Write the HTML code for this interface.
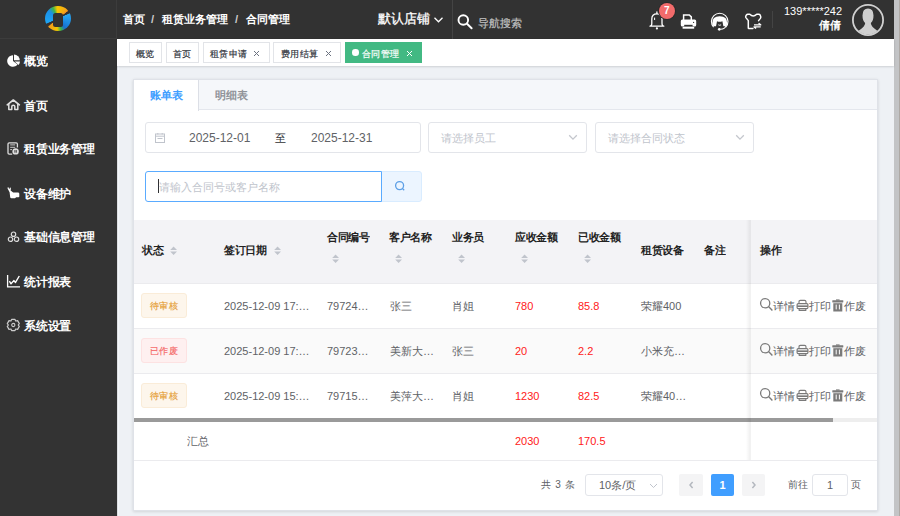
<!DOCTYPE html>
<html><head><meta charset="utf-8">
<style>
*{box-sizing:border-box;margin:0;padding:0}
html,body{width:900px;height:516px;overflow:hidden}
body{position:relative;background:#eef1f5;font-family:"Liberation Sans",sans-serif;color:#606266}
.a{position:absolute;white-space:nowrap}
svg{display:block}
/* sidebar */
#side{position:absolute;left:0;top:0;width:117px;height:516px;background:#333}
#logoline{position:absolute;left:0;top:38px;width:117px;height:1px;background:#3c3c3c}
.mi{position:absolute;left:24px;font-size:12px;transform:scale(.98);transform-origin:0 0;line-height:14px;color:#fff;font-weight:bold}
.mic{position:absolute;left:7px;width:13px;height:13px}
/* header */
#hdr{position:absolute;left:116px;top:0;width:778px;height:39px;background:#323232;border-left:1px solid #3c3c3c}
.bc{font-size:11.25px;line-height:14px;color:#fff;font-weight:bold}
#scroll{position:absolute;left:894px;top:0;width:6px;height:516px;background:#c3c4c6}
#scroll2{position:absolute;left:899px;top:0;width:1px;height:516px;background:#aea9a5}
/* tags */
#tagbar{position:absolute;left:117px;top:39px;width:777px;height:27px;background:#fff;box-shadow:0 1px 2px 0 rgba(0,0,0,.12),0 0 2px 0 rgba(0,0,0,.04)}
.tg{position:absolute;top:42px;height:21px;border:1px solid #e2e4e8;background:#fff}
.tgt{top:49px;font-size:10px;transform:scale(.93);transform-origin:0 0;line-height:12px;color:#2f333b;-webkit-text-stroke:.2px currentColor}
/* card */
#card{position:absolute;left:133px;top:79px;width:745px;height:432px;background:#fff;border:1px solid #dfe2e8;box-shadow:0 1px 3px 0 rgba(0,0,0,.10),0 0 4px 0 rgba(0,0,0,.03)}
#tabhd{position:absolute;left:134px;top:80px;width:743px;height:30px;background:#f5f7fa;border-bottom:1px solid #e4e7ed}
#tabact{position:absolute;left:134px;top:80px;width:65px;height:31px;background:#fff;border-right:1px solid #dcdfe6}
.tab{font-size:11px;line-height:14px;font-weight:bold}
.inp{position:absolute;border:1px solid #e3e5ea;border-radius:3px;background:#fff}
.ph{font-size:11px;line-height:14px;color:#c0c4cc}
/* table */
#thead{position:absolute;left:134px;top:220px;width:743px;height:63px;background:#f3f3f6}
.th{font-size:11px;line-height:14px;font-weight:bold;color:#222;transform:scale(.96);transform-origin:0 0}
.td{font-size:11px;line-height:14px;color:#606266}
.red{color:#ff2020}
.rowline{position:absolute;left:134px;width:743px;height:1px;background:#ebebee}
.st{position:absolute;left:141px;width:46px;height:25px;border:1px solid;border-radius:3px}
.stt{position:absolute;left:150px;font-size:10px;line-height:12px;transform:scale(.94);transform-origin:0 0;-webkit-text-stroke:.2px currentColor}
.st.w{background:#fdf6ec;border-color:#faecd8;color:#e6a23c}
.st.d{background:#fef0f0;border-color:#fde2e2;color:#f56c6c}
.pg{font-size:10px;line-height:14px;color:#606266}
</style></head><body>

<!-- SIDEBAR -->
<div id="side"></div>
<div id="logoline"></div>
<div class="a" style="left:45px;top:6px;width:25.5px;height:25px;border-radius:50%;background:conic-gradient(#f7c400 0deg,#f5a41a 45deg,#f08a1c 52deg,#323232 55deg,#323232 64deg,#2aa8f2 68deg,#1a86e0 120deg,#1b6fcf 145deg,#3cb44a 165deg,#f4c600 185deg,#f39c1a 228deg,#323232 234deg,#323232 244deg,#1ea4f3 248deg,#1a90e8 310deg,#3fb54a 335deg,#f7c400 355deg)"></div>
<div class="a" style="left:53px;top:12.5px;width:9.5px;height:14px;background:#323232;border-radius:2.5px"></div>
<!-- menu icons -->
<svg class="a" style="left:7px;top:54px" width="14" height="14" viewBox="0 0 14 14"><path d="M6 1.2A5.8 5.8 0 1 0 10.6 10.5L6 7z" fill="#fff"/><path d="M7 0.5V6.2H12.8A5.8 5.8 0 0 0 7 0.5z" fill="#fff"/><path d="M7.6 7.4H13A5.8 5.8 0 0 1 11.6 10.9z" fill="#fff"/></svg>
<svg class="a" style="left:0px;top:96px" width="24" height="16" viewBox="0 0 24 16"><path d="M7.2 8.8L13.3 4 19.4 8.8" fill="none" stroke="#e0e0e0" stroke-width="1.6" stroke-linejoin="round" stroke-linecap="round"/><path d="M8.8 7.7V13.6H11.8V10.6Q11.8 9.2 13.3 9.2Q14.8 9.2 14.8 10.6V13.6H17.8V7.7" fill="none" stroke="#e0e0e0" stroke-width="1.5" stroke-linejoin="round"/></svg>
<svg class="a" style="left:4px;top:139px" width="20" height="20" viewBox="0 0 20 20"><path d="M13.4 8.6V5Q13.4 3.8 12.2 3.8H5.2Q4 3.8 4 5V14Q4 15.1 5.2 15.1H8.2" fill="none" stroke="#ddd" stroke-width="1.3"/><path d="M6.2 5.9H11.2M6.2 8.3H11.2M6.2 10.6H8" stroke="#ddd" stroke-width=".9"/><circle cx="11.6" cy="12.4" r="3.2" fill="#ddd"/><path d="M10.9 11.1V13.7M12.3 11.1V13.7" stroke="#323232" stroke-width=".9"/></svg>
<svg class="a" style="left:0px;top:183px" width="22" height="18" viewBox="0 0 22 18"><path d="M7.6 5.4Q7.4 4.4 8.2 4L9.3 6.3 10.1 4.3Q10.9 4.8 10.9 5.8L10.6 7.6 13.2 9.6H17.8Q19.3 9.6 19.3 10.8V13.6Q19.3 14.3 18.5 14.3H16.2L15 15.3H11.4Q10.4 15.3 10.2 14.3L9.6 9.3Z" fill="#fff"/></svg>
<svg class="a" style="left:7px;top:231px" width="13" height="12" viewBox="0 0 13 12"><circle cx="6.5" cy="3.2" r="2.2" fill="none" stroke="#ddd" stroke-width="1.2"/><circle cx="3.5" cy="8.2" r="2.2" fill="none" stroke="#ddd" stroke-width="1.2"/><circle cx="9.5" cy="8.2" r="2.2" fill="none" stroke="#ddd" stroke-width="1.2"/></svg>
<svg class="a" style="left:6px;top:273px" width="15" height="15" viewBox="0 0 15 15"><path d="M1.6 2V13.8H14" fill="none" stroke="#fff" stroke-width="1.3"/><path d="M3.4 8.2L5 10.8 7.8 7.6 9.5 9.4 13.3 3" fill="none" stroke="#fff" stroke-width="1.4" stroke-linejoin="round"/></svg>
<svg class="a" style="left:6px;top:318px" width="15" height="14" viewBox="0 0 15 14"><path d="M5.6 1.4H9L9.6 3 11.6 2.6 13.3 5.6 12.2 7 13.3 8.4 11.6 11.4 9.6 11 9 12.6H5.6L5 11 3 11.4 1.3 8.4 2.4 7 1.3 5.6 3 2.6 5 3z" fill="none" stroke="#ccc" stroke-width="1.2" stroke-linejoin="round"/><circle cx="7.3" cy="7" r="1.6" fill="none" stroke="#ccc" stroke-width="1.1"/></svg>

<div class="mi a" style="top:54px">概览</div>
<div class="mi a" style="top:99px">首页</div>
<div class="mi a" style="top:142px">租赁业务管理</div>
<div class="mi a" style="top:187px">设备维护</div>
<div class="mi a" style="top:230px">基础信息管理</div>
<div class="mi a" style="top:275px">统计报表</div>
<div class="mi a" style="top:319px">系统设置</div>

<!-- HEADER -->
<div id="hdr"></div>
<div class="a bc" style="left:123px;top:12px">首页</div>
<div class="a bc" style="left:151px;top:12px;color:#ccc">/</div>
<div class="a bc" style="left:162px;top:12px">租赁业务管理</div>
<div class="a bc" style="left:235px;top:12px;color:#ccc">/</div>
<div class="a bc" style="left:246px;top:12px">合同管理</div>
<div class="a" style="left:378px;top:11px;font-size:13px;line-height:15px;color:#fff;-webkit-text-stroke:.3px #fff">默认店铺</div>
<svg class="a" style="left:433px;top:16px" width="11" height="8" viewBox="0 0 11 8"><path d="M1.5 1.8L5.5 5.8 9.5 1.8" fill="none" stroke="#fff" stroke-width="1.3"/></svg>
<div class="a" style="left:452px;top:0;width:1px;height:39px;background:#444"></div>
<svg class="a" style="left:456px;top:14px" width="18" height="17" viewBox="0 0 18 17"><circle cx="7.3" cy="6" r="4.8" fill="none" stroke="#fff" stroke-width="1.9"/><path d="M10.8 9.5L15.6 14.2" stroke="#fff" stroke-width="2" stroke-linecap="round"/></svg>
<div class="a" style="left:478px;top:16px;font-size:11px;line-height:14px;color:#c0c0c0;-webkit-text-stroke:.2px #c0c0c0">导航搜索</div>

<!-- header icons -->
<svg class="a" style="left:645px;top:0px" width="24" height="32" viewBox="0 0 24 32"><path d="M11.9 11.9V13.6" stroke="#fff" stroke-width="1.3" stroke-linecap="round"/><path d="M5 26.2Q6.8 26 6.8 23.5V19Q6.8 13.8 11.9 13.8Q17 13.8 17 19V23.5Q17 26 18.8 26.2Z" fill="none" stroke="#fff" stroke-width="1.3" stroke-linejoin="round"/><path d="M9.6 17.6V20" stroke="#fff" stroke-width="1"/><circle cx="11.9" cy="28.4" r="1.1" fill="#fff"/></svg>
<div class="a" style="left:658.6px;top:2.8px;width:16.2px;height:16.2px;border-radius:50%;background:#f26b6b;box-shadow:0 0 0 1px #2a2a2a;color:#fff;font-size:10px;font-weight:bold;line-height:16px;text-align:center">7</div>
<svg class="a" style="left:677px;top:8px" width="24" height="24" viewBox="0 0 24 24"><path d="M6.6 12V6.9H12.3L14.3 8.9V12" fill="none" stroke="#fff" stroke-width="1.5"/><rect x="3.8" y="11.6" width="15.4" height="6.8" rx="1.5" fill="#fff"/><rect x="7.2" y="16.8" width="8.4" height="1.6" fill="#323232"/><rect x="5.6" y="18.9" width="11.6" height="1.8" fill="#fff"/><circle cx="16.6" cy="14.4" r=".6" fill="#323232"/></svg>
<svg class="a" style="left:706px;top:8px" width="26" height="26" viewBox="0 0 26 26"><path d="M7.6 19.2A8.3 8.3 0 1 1 19.8 19.2" fill="none" stroke="#fff" stroke-width="1.1"/><path d="M6.2 15.5Q6 8.3 13.7 8.3Q21.4 8.3 21.2 15.5Q21.1 18 19.3 18.2L17.4 18.2Q16.9 16 16.4 13.2Q13.5 14.4 11 13.2Q10.5 16 10 18.2L8.1 18.2Q6.3 18 6.2 15.5z" fill="#fff"/><path d="M12.3 16.8Q13.7 17.8 15.1 16.8" fill="none" stroke="#fff" stroke-width=".9"/><path d="M19.8 18.2Q18.8 21.2 14.6 21.3" fill="none" stroke="#fff" stroke-width="1.1"/><circle cx="13.3" cy="21.3" r="1.4" fill="#fff"/></svg>
<svg class="a" style="left:740px;top:8px" width="26" height="26" viewBox="0 0 26 26"><path d="M12.9 20.6H8.8Q8.3 20.6 8.3 20.1V12.6L5.9 9.6Q5.5 9 5.8 8.2L6.4 7Q6.9 6.3 7.8 6.3H9.8Q13.2 9.6 16.7 6.3H18.8Q19.7 6.3 20.2 7.2L20.7 8.5Q21 9.5 20.4 10.4L18.6 12.6" fill="none" stroke="#fff" stroke-width="1.5" stroke-linejoin="round" stroke-linecap="round"/><path d="M14 16.9H20.7L18.6 15.3M20.7 18.9H14L16.1 20.5" fill="none" stroke="#fff" stroke-width="1.4" stroke-linejoin="round"/></svg>
<div class="a" style="left:772px;top:11px;width:1px;height:17px;background:#444"></div>
<div class="a" style="left:784px;top:5px;font-size:11px;line-height:13px;color:#fff">139*****242</div>
<div class="a" style="left:819px;top:18px;font-size:11px;line-height:14px;color:#fff;font-weight:bold">倩倩</div>
<svg class="a" style="left:851px;top:3px" width="34" height="34" viewBox="0 0 34 34"><defs><clipPath id="cc"><circle cx="17" cy="17" r="14.5"/></clipPath></defs><circle cx="17" cy="17" r="15.1" fill="none" stroke="#d0d0d0" stroke-width="1.8"/><g clip-path="url(#cc)"><path d="M17 5.5Q11.5 5.5 11.5 12.5Q11.5 18 14.2 20Q14 23.5 8 27.5Q6 29 5 32H29Q28 29 26 27.5Q20 23.5 19.8 20Q22.5 18 22.5 12.5Q22.5 5.5 17 5.5z" fill="#cfcfcf"/></g></svg>

<div id="scroll"></div><div id="scroll2"></div>

<div class="a" style="left:117px;top:66px;width:1px;height:450px;background:#dde0e4"></div><div class="a" style="left:118px;top:66px;width:1px;height:450px;background:#f4f7fa"></div>
<!-- TAGS -->
<div id="tagbar"></div>
<div class="tg" style="left:129px;width:33px"></div>
<div class="tg" style="left:166px;width:33px"></div>
<div class="tg" style="left:203px;width:67px"></div>
<div class="tg" style="left:273px;width:68px"></div>
<div class="tg" style="left:345px;width:77px;background:#42b983;border-color:#42b983"></div>
<div class="a tgt" style="left:136px">概览</div>
<div class="a tgt" style="left:173px">首页</div>
<div class="a tgt" style="left:210px">租赁申请</div><svg class="a" style="left:253px;top:50px" width="7" height="7" viewBox="0 0 7 7"><path d="M1 1L6 6M6 1L1 6" stroke="#6b7280" stroke-width="1"/></svg>
<div class="a tgt" style="left:281px">费用结算</div><svg class="a" style="left:325px;top:50px" width="7" height="7" viewBox="0 0 7 7"><path d="M1 1L6 6M6 1L1 6" stroke="#6b7280" stroke-width="1"/></svg>
<div class="a" style="left:352px;top:49px;width:6.5px;height:6.5px;border-radius:50%;background:#fff"></div>
<div class="a tgt" style="left:362px;color:#fff">合同管理</div><svg class="a" style="left:406px;top:50px" width="7" height="7" viewBox="0 0 7 7"><path d="M1 1L6 6M6 1L1 6" stroke="#fff" stroke-width="1"/></svg>

<!-- CARD -->
<div id="card"></div>
<div id="tabhd"></div>
<div id="tabact"></div>
<div class="a tab" style="left:150px;top:88px;color:#409eff">账单表</div>
<div class="a tab" style="left:215px;top:88px;color:#909399">明细表</div>

<!-- filters -->
<div class="inp" style="left:145px;top:122px;width:276px;height:31px"></div>
<svg class="a" style="left:154px;top:132px" width="12" height="12" viewBox="0 0 12 12"><rect x="1.5" y="2" width="9" height="8.5" fill="none" stroke="#c0c4cc" stroke-width="1"/><path d="M1.5 4.2H10.5M3.5 6.5H8.5" stroke="#c0c4cc" stroke-width="1"/><path d="M3.8 1V2.5M8.2 1V2.5" stroke="#c0c4cc" stroke-width="1"/></svg>
<div class="a" style="left:189px;top:131px;font-size:12px;line-height:14px;color:#606266">2025-12-01</div>
<div class="a" style="left:275px;top:131px;font-size:11px;line-height:14px;color:#303133">至</div>
<div class="a" style="left:311px;top:131px;font-size:12px;line-height:14px;color:#606266">2025-12-31</div>

<div class="inp" style="left:428px;top:122px;width:159px;height:31px"></div>
<div class="a ph" style="left:441px;top:131px">请选择员工</div>
<svg class="a" style="left:567px;top:133px" width="12" height="8" viewBox="0 0 12 8"><path d="M2.2 2.3L6 6.1 9.8 2.3" fill="none" stroke="#c4c7cd" stroke-width="1.3"/></svg>
<div class="inp" style="left:595px;top:122px;width:159px;height:31px"></div>
<div class="a ph" style="left:608px;top:131px">请选择合同状态</div>
<svg class="a" style="left:734px;top:133px" width="12" height="8" viewBox="0 0 12 8"><path d="M2.2 2.3L6 6.1 9.8 2.3" fill="none" stroke="#c4c7cd" stroke-width="1.3"/></svg>

<div class="a" style="left:381px;top:171px;width:41px;height:31px;background:#ecf5ff;border:1px solid #d9ecff;border-radius:0 3px 3px 0"></div>
<div class="inp" style="left:145px;top:171px;width:237px;height:31px;border-color:#5aabff;border-radius:3px 0 0 3px"></div>
<div class="a" style="left:158px;top:179px;width:1px;height:14px;background:#303133"></div>
<div class="a ph" style="left:159px;top:180px">请输入合同号或客户名称</div>
<svg class="a" style="left:394px;top:180px" width="12" height="12" viewBox="0 0 12 12"><circle cx="5.6" cy="5.6" r="4" fill="none" stroke="#5c9fe6" stroke-width="1.3"/><path d="M8.6 8.6L10.2 10.2" stroke="#5c9fe6" stroke-width="1.3"/></svg>

<!-- TABLE -->
<div id="thead"></div>
<div class="a th" style="left:142px;top:243px">状态</div>
<div class="a th" style="left:224px;top:243px">签订日期</div>
<div class="a th" style="left:327px;top:230px">合同编号</div>
<div class="a th" style="left:389px;top:230px">客户名称</div>
<div class="a th" style="left:452px;top:230px">业务员</div>
<div class="a th" style="left:515px;top:230px">应收金额</div>
<div class="a th" style="left:578px;top:230px">已收金额</div>
<div class="a th" style="left:641px;top:243px">租赁设备</div>
<div class="a th" style="left:704px;top:243px">备注</div>
<div class="a th" style="left:760px;top:243px">操作</div>

<svg width="0" height="0" style="position:absolute"><defs><g id="sort"><path d="M0.2 4L3.6 0.6 7 4z" fill="#c0c4cc"/><path d="M0.2 5.6L3.6 9 7 5.6z" fill="#c0c4cc"/></g></defs></svg>
<svg class="a" style="left:170px;top:246px" width="8" height="10"><use href="#sort"/></svg>
<svg class="a" style="left:274px;top:246px" width="8" height="10"><use href="#sort"/></svg>
<svg class="a" style="left:332px;top:254px" width="8" height="10"><use href="#sort"/></svg>
<svg class="a" style="left:395px;top:254px" width="8" height="10"><use href="#sort"/></svg>
<svg class="a" style="left:458px;top:254px" width="8" height="10"><use href="#sort"/></svg>
<svg class="a" style="left:521px;top:254px" width="8" height="10"><use href="#sort"/></svg>
<svg class="a" style="left:584px;top:254px" width="8" height="10"><use href="#sort"/></svg>

<div class="a" style="left:134px;top:328px;width:743px;height:45px;background:#fafafa"></div>
<div class="rowline" style="top:283px"></div>
<div class="rowline" style="top:328px"></div>
<div class="rowline" style="top:373px"></div>

<div class="st w a" style="top:293px"></div><div class="a stt" style="top:301px;color:#e6a23c">待审核</div>
<div class="st d a" style="top:338px"></div><div class="a stt" style="top:346px;color:#f56c6c">已作废</div>
<div class="st w a" style="top:383px"></div><div class="a stt" style="top:391px;color:#e6a23c">待审核</div>

<div class="a td" style="left:224px;top:299px">2025-12-09 17:…</div>
<div class="a td" style="left:327px;top:299px">79724…</div>
<div class="a td" style="left:390px;top:299px">张三</div>
<div class="a td" style="left:452px;top:299px">肖姐</div>
<div class="a td red" style="left:515px;top:299px">780</div>
<div class="a td red" style="left:578px;top:299px">85.8</div>
<div class="a td" style="left:641px;top:299px">荣耀400</div>

<div class="a td" style="left:224px;top:344px">2025-12-09 17:…</div>
<div class="a td" style="left:327px;top:344px">79723…</div>
<div class="a td" style="left:390px;top:344px">美新大…</div>
<div class="a td" style="left:452px;top:344px">张三</div>
<div class="a td red" style="left:515px;top:344px">20</div>
<div class="a td red" style="left:578px;top:344px">2.2</div>
<div class="a td" style="left:641px;top:344px">小米充…</div>

<div class="a td" style="left:224px;top:389px">2025-12-09 15:…</div>
<div class="a td" style="left:327px;top:389px">79715…</div>
<div class="a td" style="left:390px;top:389px">美萍大…</div>
<div class="a td" style="left:452px;top:389px">肖姐</div>
<div class="a td red" style="left:515px;top:389px">1230</div>
<div class="a td red" style="left:578px;top:389px">82.5</div>
<div class="a td" style="left:641px;top:389px">荣耀40…</div>

<!-- scrollbar -->
<div class="a" style="left:134px;top:418px;width:743px;height:4px;background:#eeeeee"></div>
<div class="a" style="left:134px;top:418px;width:699px;height:4px;background:#9a9a9a"></div>

<!-- summary -->
<div class="a td" style="left:187px;top:434px;color:#606266">汇总</div>
<div class="a td red" style="left:515px;top:434px">2030</div>
<div class="a td red" style="left:578px;top:434px">170.5</div>
<div class="rowline" style="top:460px"></div>

<!-- fixed col shadow -->
<div class="a" style="left:746px;top:220px;width:4px;height:240px;background:linear-gradient(90deg,rgba(0,0,0,0),rgba(0,0,0,.06))"></div><div class="a" style="left:750px;top:220px;width:1px;height:240px;background:rgba(0,0,0,.05)"></div>

<!-- actions -->
<svg width="0" height="0" style="position:absolute"><defs>
<g id="acts">
<circle cx="5.6" cy="5.6" r="4.6" fill="none" stroke="#8a8a8a" stroke-width="1.3"/><path d="M9 9L12.6 12.4" stroke="#8a8a8a" stroke-width="1.4"/>
</g></defs></svg>
<svg class="a" style="left:756px;top:296px" width="20" height="20" viewBox="0 0 20 20"><circle cx="9.2" cy="7.2" r="4.6" fill="none" stroke="#7a7a7a" stroke-width="1.3"/><path d="M12.5 10.6L16.4 14.4" stroke="#7a7a7a" stroke-width="1.4"/></svg>
<div class="a td" style="left:773px;top:299px">详情</div>
<svg class="a" style="left:796px;top:299px" width="13" height="13" viewBox="0 0 13 13"><path d="M3 5V2.8Q3 1.4 4.4 1.4H8.6Q10 1.4 10 2.8V5" fill="none" stroke="#7a7a7a" stroke-width="1.1"/><rect x="1.1" y="4.6" width="10.8" height="5" rx="1.2" fill="none" stroke="#7a7a7a" stroke-width="1.2"/><rect x="1.1" y="6.4" width="10.8" height="1.6" fill="#7a7a7a"/><path d="M3.2 9.4V11.4H9.8V9.4" fill="none" stroke="#7a7a7a" stroke-width="1.1"/></svg>
<div class="a td" style="left:809px;top:299px">打印</div>
<svg class="a" style="left:832px;top:299px" width="12" height="14" viewBox="0 0 12 14"><rect x="0.3" y="1.2" width="11" height="2.3" rx=".4" fill="#7a7a7a"/><rect x="4" y="0.4" width="3.6" height="1.2" fill="#7a7a7a"/><path d="M1.3 4.2H10.3V12.5H1.3z" fill="#7a7a7a"/><path d="M4.2 5.6V10.4M7.4 5.6V10.4" stroke="#fff" stroke-width="1"/></svg>
<div class="a td" style="left:844px;top:299px">作废</div>
<svg class="a" style="left:756px;top:341px" width="20" height="20" viewBox="0 0 20 20"><circle cx="9.2" cy="7.2" r="4.6" fill="none" stroke="#7a7a7a" stroke-width="1.3"/><path d="M12.5 10.6L16.4 14.4" stroke="#7a7a7a" stroke-width="1.4"/></svg>
<div class="a td" style="left:773px;top:344px">详情</div>
<svg class="a" style="left:796px;top:344px" width="13" height="13" viewBox="0 0 13 13"><path d="M3 5V2.8Q3 1.4 4.4 1.4H8.6Q10 1.4 10 2.8V5" fill="none" stroke="#7a7a7a" stroke-width="1.1"/><rect x="1.1" y="4.6" width="10.8" height="5" rx="1.2" fill="none" stroke="#7a7a7a" stroke-width="1.2"/><rect x="1.1" y="6.4" width="10.8" height="1.6" fill="#7a7a7a"/><path d="M3.2 9.4V11.4H9.8V9.4" fill="none" stroke="#7a7a7a" stroke-width="1.1"/></svg>
<div class="a td" style="left:809px;top:344px">打印</div>
<svg class="a" style="left:832px;top:344px" width="12" height="14" viewBox="0 0 12 14"><rect x="0.3" y="1.2" width="11" height="2.3" rx=".4" fill="#7a7a7a"/><rect x="4" y="0.4" width="3.6" height="1.2" fill="#7a7a7a"/><path d="M1.3 4.2H10.3V12.5H1.3z" fill="#7a7a7a"/><path d="M4.2 5.6V10.4M7.4 5.6V10.4" stroke="#fff" stroke-width="1"/></svg>
<div class="a td" style="left:844px;top:344px">作废</div>
<svg class="a" style="left:756px;top:386px" width="20" height="20" viewBox="0 0 20 20"><circle cx="9.2" cy="7.2" r="4.6" fill="none" stroke="#7a7a7a" stroke-width="1.3"/><path d="M12.5 10.6L16.4 14.4" stroke="#7a7a7a" stroke-width="1.4"/></svg>
<div class="a td" style="left:773px;top:389px">详情</div>
<svg class="a" style="left:796px;top:389px" width="13" height="13" viewBox="0 0 13 13"><path d="M3 5V2.8Q3 1.4 4.4 1.4H8.6Q10 1.4 10 2.8V5" fill="none" stroke="#7a7a7a" stroke-width="1.1"/><rect x="1.1" y="4.6" width="10.8" height="5" rx="1.2" fill="none" stroke="#7a7a7a" stroke-width="1.2"/><rect x="1.1" y="6.4" width="10.8" height="1.6" fill="#7a7a7a"/><path d="M3.2 9.4V11.4H9.8V9.4" fill="none" stroke="#7a7a7a" stroke-width="1.1"/></svg>
<div class="a td" style="left:809px;top:389px">打印</div>
<svg class="a" style="left:832px;top:389px" width="12" height="14" viewBox="0 0 12 14"><rect x="0.3" y="1.2" width="11" height="2.3" rx=".4" fill="#7a7a7a"/><rect x="4" y="0.4" width="3.6" height="1.2" fill="#7a7a7a"/><path d="M1.3 4.2H10.3V12.5H1.3z" fill="#7a7a7a"/><path d="M4.2 5.6V10.4M7.4 5.6V10.4" stroke="#fff" stroke-width="1"/></svg>
<div class="a td" style="left:844px;top:389px">作废</div>


<!-- pagination -->
<div class="a pg" style="left:541px;top:478px;word-spacing:1.5px">共 3 条</div>
<div class="inp" style="left:585px;top:474px;width:78px;height:22px"></div>
<div class="a pg" style="left:599px;top:478px;font-size:11px">10条/页</div>
<svg class="a" style="left:649px;top:483px" width="9" height="6" viewBox="0 0 9 6"><path d="M1 1L4.5 4.5 8 1" fill="none" stroke="#c0c4cc" stroke-width="1"/></svg>
<div class="a" style="left:679px;top:474px;width:24px;height:22px;background:#f4f4f5;border-radius:2px"></div>
<svg class="a" style="left:687px;top:480px" width="8" height="10" viewBox="0 0 8 10"><path d="M5.6 2L3 5 5.6 8" fill="none" stroke="#b4b8bf" stroke-width="1.5"/></svg>
<div class="a" style="left:711px;top:474px;width:23px;height:22px;background:#409eff;border-radius:2px;color:#fff;font-weight:bold;font-size:11px;line-height:22px;text-align:center">1</div>
<div class="a" style="left:742px;top:474px;width:23px;height:22px;background:#f4f4f5;border-radius:2px"></div>
<svg class="a" style="left:750px;top:480px" width="8" height="10" viewBox="0 0 8 10"><path d="M2.4 2L5 5 2.4 8" fill="none" stroke="#b4b8bf" stroke-width="1.5"/></svg>
<div class="a pg" style="left:788px;top:478px">前往</div>
<div class="inp" style="left:812px;top:474px;width:36px;height:22px;text-align:center;font-size:11px;line-height:20px;color:#606266">1</div>
<div class="a pg" style="left:851px;top:478px">页</div>

</body></html>
